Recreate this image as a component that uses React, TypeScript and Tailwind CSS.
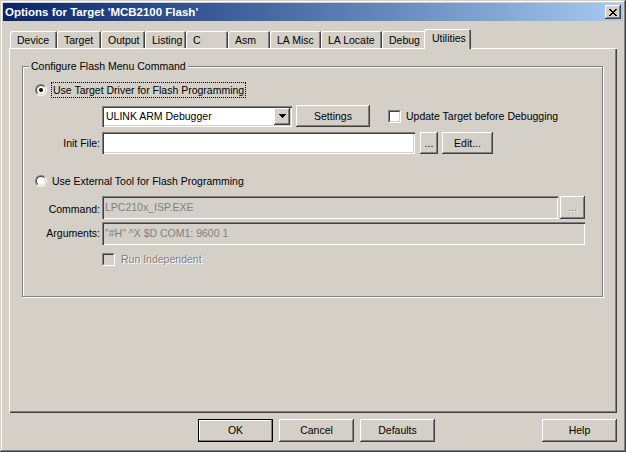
import React from "react";

const RAISED =
  "bg-[#D4D0C8] shadow-[inset_-1px_-1px_#404040,inset_1px_1px_#fff,inset_-2px_-2px_#808080]";
const SUNKEN =
  "shadow-[inset_1px_1px_#808080,inset_2px_2px_#404040,inset_-1px_-1px_#fff,inset_-2px_-2px_#D4D0C8]";

function Radio({ checked }: { checked?: boolean }) {
  return (
    <div className="w-[12px] h-[12px] shrink-0 rounded-full border border-t-[#808080] border-l-[#808080] border-r-white border-b-white flex items-center justify-center">
      <div className="w-[10px] h-[10px] rounded-full border border-t-[#404040] border-l-[#404040] border-r-[#D4D0C8] border-b-[#D4D0C8] bg-white flex items-center justify-center">
        {checked && <div className="w-[4px] h-[4px] rounded-full bg-black" />}
      </div>
    </div>
  );
}

function Check({ disabled }: { disabled?: boolean }) {
  return (
    <div className="w-[13px] h-[13px] shrink-0 border border-t-[#808080] border-l-[#808080] border-r-white border-b-white">
      <div
        className={
          "w-[11px] h-[11px] border border-t-[#404040] border-l-[#404040] border-r-[#D4D0C8] border-b-[#D4D0C8] " +
          (disabled ? "bg-[#D4D0C8]" : "bg-white")
        }
      />
    </div>
  );
}

function CloseGlyph() {
  const px: [number, number][] = [
    [0, 0], [1, 0], [6, 0], [7, 0],
    [1, 1], [2, 1], [5, 1], [6, 1],
    [2, 2], [3, 2], [4, 2], [5, 2],
    [3, 3], [4, 3],
    [2, 4], [3, 4], [4, 4], [5, 4],
    [1, 5], [2, 5], [5, 5], [6, 5],
    [0, 6], [1, 6], [6, 6], [7, 6],
  ];
  return (
    <svg width="8" height="7" viewBox="0 0 8 7" shapeRendering="crispEdges">
      {px.map(([x, y], i) => (
        <rect key={i} x={x} y={y} width="1" height="1" fill="#000" />
      ))}
    </svg>
  );
}

function ArrowGlyph() {
  return (
    <svg width="7" height="4" viewBox="0 0 7 4" shapeRendering="crispEdges">
      <rect x="0" y="0" width="7" height="1" fill="#000" />
      <rect x="1" y="1" width="5" height="1" fill="#000" />
      <rect x="2" y="2" width="3" height="1" fill="#000" />
      <rect x="3" y="3" width="1" height="1" fill="#000" />
    </svg>
  );
}

const tabs: { label: string; w: string; sel?: boolean }[] = [
  { label: "Device", w: "w-[47px]" },
  { label: "Target", w: "w-[44px]" },
  { label: "Output", w: "w-[44px]" },
  { label: "Listing", w: "w-[41px]" },
  { label: "C", w: "w-[42px]" },
  { label: "Asm", w: "w-[42px]" },
  { label: "LA Misc", w: "w-[51px]" },
  { label: "LA Locate", w: "w-[61px]" },
  { label: "Debug", w: "w-[44px]" },
  { label: "Utilities", w: "w-[47px]", sel: true },
];

export default function App() {
  return (
    <div className="w-[626px] h-[452px] bg-[#D4D0C8] p-[3px] flex flex-col text-[10.5px] leading-[13px] text-black font-['Liberation_Sans',Arial,sans-serif] shadow-[inset_-1px_-1px_#404040,inset_1px_1px_#D4D0C8,inset_-2px_-2px_#808080,inset_2px_2px_#fff]">
      {/* Title bar */}
      <div className="h-[18px] flex items-center justify-between bg-linear-to-r from-[#0A246A] to-[#A6CAF0] pl-[2px] pr-[2px]">
        <span className="text-white font-bold text-[11.5px]">Options for Target 'MCB2100 Flash'</span>
        <div className={"w-[16px] h-[14px] flex items-center justify-center " + RAISED}>
          <CloseGlyph />
        </div>
      </div>

      {/* Tabs */}
      <div className="mt-[8px] ml-[7px] h-[19px] flex items-end relative z-10">
        {tabs.map((t) =>
          t.sel ? (
            <div
              key={t.label}
              className={
                t.w +
                " -ml-[2px] -mr-[2px] h-[20px] -mb-[1px] bg-[#D4D0C8] rounded-t-[2px] flex items-center pl-[8px] pb-[2px] relative z-10 shadow-[inset_1px_1px_#fff,inset_-1px_0_#404040,inset_-2px_0_#808080]"
              }
            >
              {t.label}
            </div>
          ) : (
            <div
              key={t.label}
              className={
                t.w +
                " h-[17px] bg-[#D4D0C8] rounded-t-[2px] flex items-center pl-[7px] pt-[2px] shadow-[inset_1px_1px_#fff,inset_-1px_0_#404040,inset_-2px_0_#808080]"
              }
            >
              {t.label}
            </div>
          )
        )}
      </div>

      {/* Panel */}
      <div className="mx-[6px] h-[365px] pt-[18px] pl-[13px] shadow-[inset_1px_1px_#fff,inset_-1px_-1px_#404040,inset_-2px_-2px_#808080]">
        <div className="relative w-[581px] h-[231px] border border-[#808080] shadow-[1px_1px_0_#fff,inset_1px_1px_0_#fff] flex flex-col pt-[15px]">
          <span className="absolute left-[6px] top-[-7px] px-[2px] bg-[#D4D0C8]">Configure Flash Menu Command</span>

          {/* Row 1 */}
          <div className="h-[16px] ml-[12px] flex items-center">
            <Radio checked />
            <div className="ml-[4px] h-[16px] border border-dotted border-black px-[1px] flex items-center">
              Use Target Driver for Flash Programming
            </div>
          </div>

          {/* Row 2 */}
          <div className="mt-[7px] h-[22px] ml-[79px] flex items-center">
            <div className={"w-[190px] h-[21px] bg-white p-[2px] flex items-center justify-between " + SUNKEN}>
              <span className="pl-[2px]">ULINK ARM Debugger</span>
              <div className={"w-[16px] h-[17px] flex items-center justify-center " + RAISED}>
                <ArrowGlyph />
              </div>
            </div>
            <div className={"ml-[4px] w-[74px] h-[22px] flex items-center justify-center " + RAISED}>Settings</div>
            <div className="ml-[18px]">
              <Check />
            </div>
            <span className="ml-[5px]">Update Target before Debugging</span>
          </div>

          {/* Row 3 */}
          <div className="mt-[5px] h-[22px] flex items-center">
            <span className="w-[77px] text-right">Init File:</span>
            <div className={"ml-[2px] w-[313px] h-[22px] bg-white " + SUNKEN} />
            <div className={"ml-[5px] w-[18px] h-[22px] flex items-center justify-center " + RAISED}>...</div>
            <div className={"ml-[4px] w-[51px] h-[22px] flex items-center justify-center " + RAISED}>Edit...</div>
          </div>

          {/* Row 4 */}
          <div className="mt-[19px] h-[16px] ml-[12px] flex items-center">
            <Radio />
            <span className="ml-[5px]">Use External Tool for Flash Programming</span>
          </div>

          {/* Row 5 */}
          <div className="mt-[7px] h-[23px] flex items-center">
            <span className="w-[77px] text-right pt-[3px]">Command:</span>
            <div className={"ml-[2px] w-[456px] h-[23px] flex items-center pl-[3px] text-[#808080] " + SUNKEN}>
              LPC210x_ISP.EXE
            </div>
            <div className={"ml-[2px] w-[25px] h-[23px] flex items-center justify-center text-[#808080] [text-shadow:1px_1px_0_#fff] " + RAISED}>
              ...
            </div>
          </div>

          {/* Row 6 */}
          <div className="mt-[3px] h-[23px] flex items-center">
            <span className="w-[77px] text-right">Arguments:</span>
            <div className={"ml-[2px] w-[483px] h-[23px] flex items-center pl-[3px] text-[#808080] " + SUNKEN}>
              "#H" ^X $D COM1: 9600 1
            </div>
          </div>

          {/* Row 7 */}
          <div className="mt-[8px] h-[13px] ml-[79px] flex items-center">
            <Check disabled />
            <span className="ml-[6px] text-[#808080] [text-shadow:1px_1px_0_#fff]">Run Independent</span>
          </div>
        </div>
      </div>

      {/* Bottom buttons */}
      <div className="mt-[6px] ml-[195px] flex">
        <div className="w-[75px] h-[23px] border border-black bg-[#D4D0C8] flex items-center justify-center shadow-[inset_-1px_-1px_#808080,inset_1px_1px_#fff]">
          OK
        </div>
        <div className={"ml-[6px] w-[75px] h-[23px] flex items-center justify-center " + RAISED}>Cancel</div>
        <div className={"ml-[6px] w-[75px] h-[23px] flex items-center justify-center " + RAISED}>Defaults</div>
        <div className={"ml-[107px] w-[75px] h-[23px] flex items-center justify-center " + RAISED}>Help</div>
      </div>
    </div>
  );
}
